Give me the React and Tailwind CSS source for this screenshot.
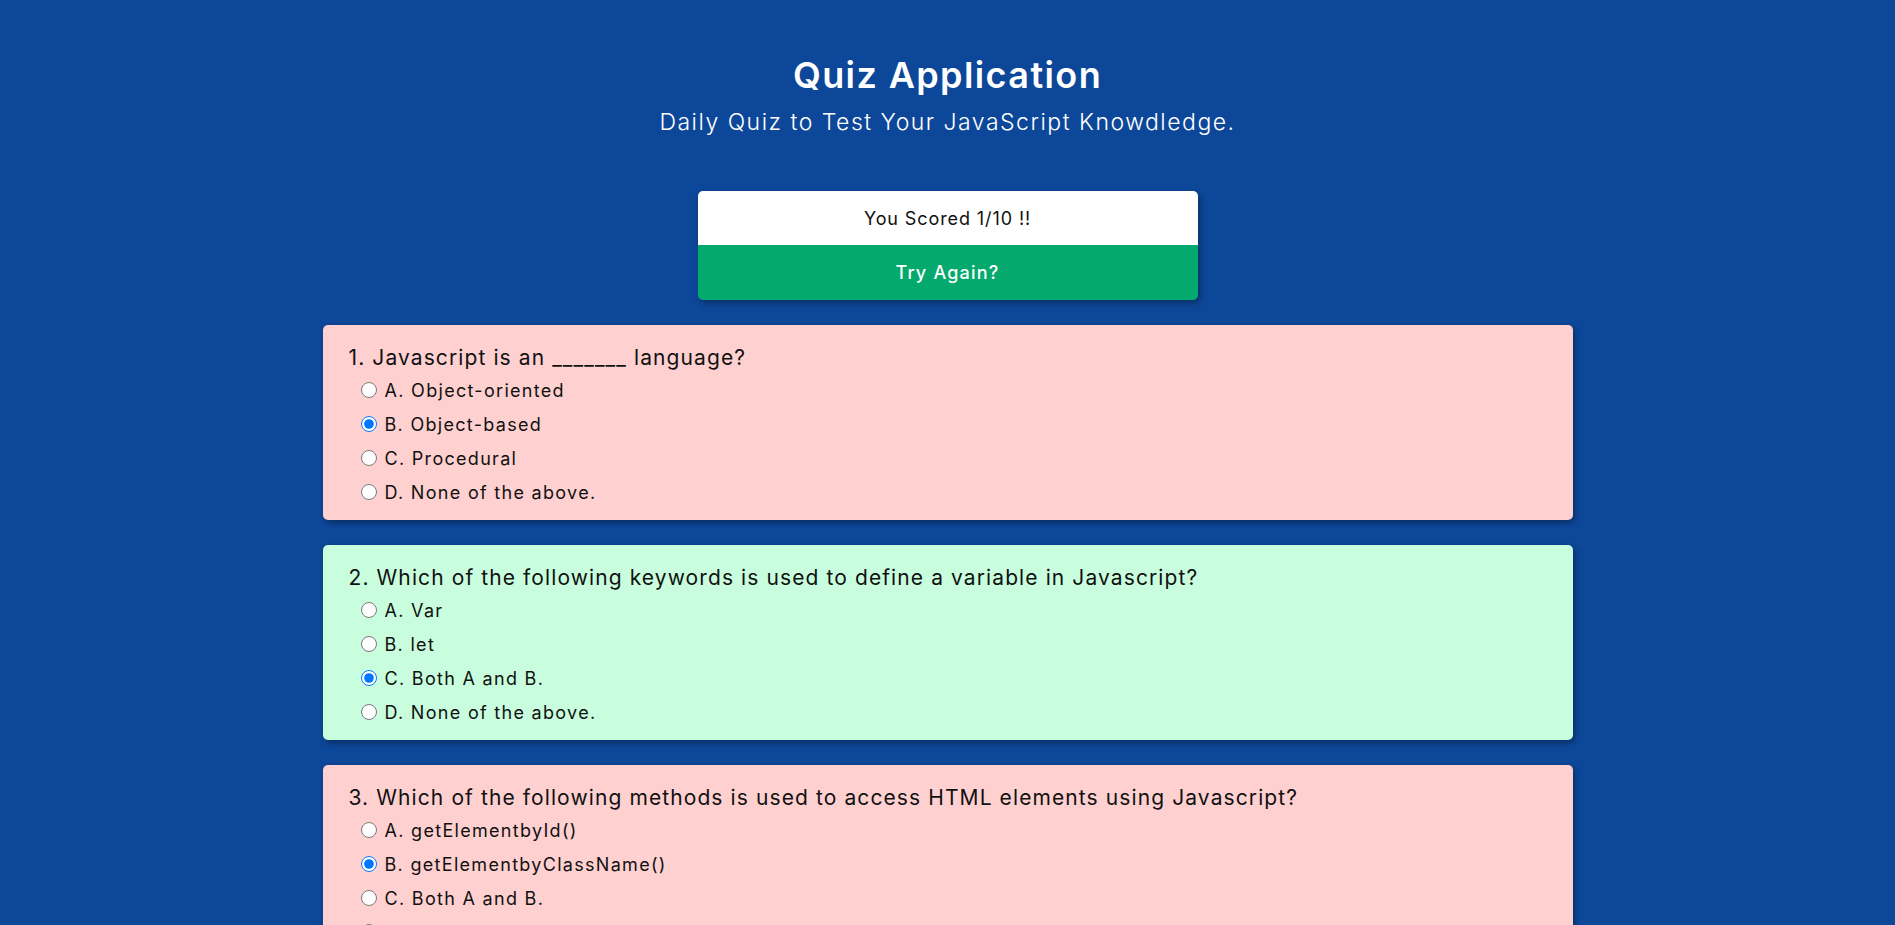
import React from 'react';

const questions = [
  {
    q: 'Javascript is an _______ language?',
    options: ['Object-oriented', 'Object-based', 'Procedural', 'None of the above.'],
    picked: 1,
    correct: false,
  },
  {
    q: 'Which of the following keywords is used to define a variable in Javascript?',
    options: ['Var', 'let', 'Both A and B.', 'None of the above.'],
    picked: 2,
    correct: true,
  },
  {
    q: 'Which of the following methods is used to access HTML elements using Javascript?',
    options: ['getElementbyId()', 'getElementbyClassName()', 'Both A and B.', 'None of the above.'],
    picked: 1,
    correct: false,
  },
  {
    q: 'Upon encountering empty statements, what does the Javascript Interpreter do?',
    options: ['Throws an error', 'Ignores the statements', 'Gives a warning', 'None of the above.'],
    picked: 0,
    correct: false,
  },
  {
    q: 'Which of the following methods can be used to display data in some form using Javascript?',
    options: ['document.write()', 'console.log()', 'window.alert()', 'All of the above.'],
    picked: 1,
    correct: false,
  },
];

const letters = ['A', 'B', 'C', 'D'];

const QuestionCard = ({ item, index }) => (
  <div
    className={`rounded-[5px] px-[26px] pt-[18px] pb-[11px] shadow-[2px_3px_6px_rgba(0,0,0,0.35)] ${
      item.correct ? 'bg-[#c8fedd]' : 'bg-[#ffd0d0]'
    }`}
  >
    <h3 className="text-[21px] leading-[30px] tracking-[1.1px] text-[#111]">
      {index + 1}. {item.q}
    </h3>
    <div>
      {item.options.map((opt, i) => (
        <label key={i} className="flex items-center h-[34px] pl-[12px] text-[18px] tracking-[1.3px] text-[#111]">
          <input
            type="radio"
            name={`q${index}`}
            defaultChecked={i === item.picked}
            className="m-0 mr-[8px] w-[16px] h-[16px]"
          />
          {letters[i]}. {opt}
        </label>
      ))}
    </div>
  </div>
);

export default function App() {
  return (
    <div className="min-h-screen bg-[#0d4799] pb-10 font-['Inter','Noto_Sans',sans-serif]">
      {/* Header */}
      <header className="pt-[50px] text-center text-white">
        <h1 className="text-[36px] font-semibold leading-[50px] tracking-[1.4px]">Quiz Application</h1>
        <p className="mt-[7px] text-[23px] font-light leading-[30px] tracking-[1.5px]">
          Daily Quiz to Test Your JavaScript Knowdledge.
        </p>
      </header>

      {/* Score */}
      <div className="mt-[54px] mx-auto w-[500px] rounded-[5px] overflow-hidden shadow-[2px_3px_6px_rgba(0,0,0,0.35)]">
        <div className="h-[54px] bg-white flex items-center justify-center text-[18px] tracking-[0.9px] text-[#111]">
          You Scored 1/10 !!
        </div>
        <button className="w-full h-[55px] bg-[#04a96d] flex items-center justify-center text-[18px] font-medium tracking-[1.2px] text-white">
          Try Again?
        </button>
      </div>

      {/* Questions */}
      <div className="mt-[25px] mx-auto w-[1250px] flex flex-col gap-[25px]">
        {questions.map((item, idx) => (
          <QuestionCard key={idx} item={item} index={idx} />
        ))}
      </div>
    </div>
  );
}
